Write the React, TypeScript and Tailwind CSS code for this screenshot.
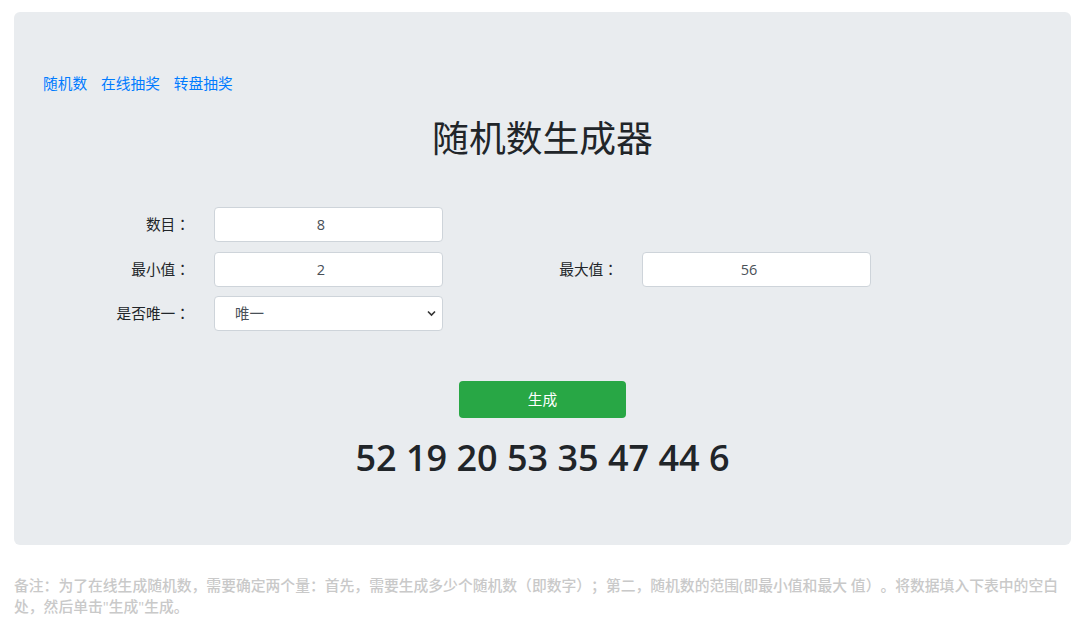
import React from "react";

const cjk = { fontFamily: '"Open Sans", "Noto Sans CJK SC", sans-serif' };
const colon = { fontFamily: '"Noto Sans CJK TC", sans-serif' };

function Label({ text }: { text: string }) {
  return (
    <label className="w-[147px] text-right text-[14.7px] text-[#212529]">
      {text}
      <span style={colon}>：</span>
    </label>
  );
}

function Field({ label, value }: { label: string; value: string }) {
  return (
    <div className="flex items-center w-[428px]">
      <Label text={label} />
      <input
        type="number"
        defaultValue={value}
        className="ml-[24px] w-[229px] h-[35px] bg-white border border-[#ced4da] rounded-[4px] text-center text-[14.5px] text-[#495057] outline-none"
        style={cjk}
      />
    </div>
  );
}

export default function App() {
  return (
    <div className="bg-white min-h-[623px] pl-[14px] pt-[12px]" style={cjk}>
      <div className="w-[1057px] bg-[#e9ecef] rounded-[6px] pt-[61px] pb-[65px] px-[29px]">
        <div className="flex gap-[14px] h-[21px] leading-[21px] text-[14.7px]">
          <a className="text-[#007bff]">随机数</a>
          <a className="text-[#007bff]">在线抽奖</a>
          <a className="text-[#007bff]">转盘抽奖</a>
        </div>
        <h1 className="mt-[22px] text-center text-[36.8px] leading-[44px] text-[#212529] font-normal">随机数生成器</h1>
        <div className="mt-[47px] flex flex-col">
          <div className="flex">
            <Field label="数目" value="8" />
          </div>
          <div className="flex mt-[10px]">
            <Field label="最小值" value="2" />
            <Field label="最大值" value="56" />
          </div>
          <div className="flex mt-[9px]">
            <div className="flex items-center w-[428px]">
              <Label text="是否唯一" />
              <div className="relative ml-[24px] w-[229px] h-[35px]">
                <select
                  className="appearance-none w-full h-full bg-white border border-[#ced4da] rounded-[4px] pl-[20px] text-[14.5px] text-[#495057] outline-none"
                  style={cjk}
                  defaultValue="唯一"
                >
                  <option>唯一</option>
                  <option>不唯一</option>
                </select>
                <svg
                  className="absolute right-[7px] top-[14px] pointer-events-none"
                  width="9"
                  height="7"
                  viewBox="0 0 9 7"
                >
                  <path d="M1 1.5 L4.5 5 L8 1.5" fill="none" stroke="#333" strokeWidth="1.6" />
                </svg>
              </div>
            </div>
          </div>
        </div>
        <div className="mt-[50px] flex justify-center">
          <button className="w-[167px] h-[37px] bg-[#28a745] text-white rounded-[4px] text-[14.7px]" style={cjk}>
            生成
          </button>
        </div>
        <div
          className="mt-[18px] text-center text-[36px] leading-[44px] font-semibold text-[#212529]"
          style={cjk}
        >
          52 19 20 53 35 47 44 6
        </div>
      </div>
      <p className="mt-[30px] w-[1057px] text-[14.8px] leading-[21px] font-medium text-[#c9c9c9] [text-spacing-trim:space-all]">
        备注：为了在线生成随机数，需要确定两个量：首先，需要生成多少个随机数（即数字）；第二，随机数的范围(即最小值和最大 值）。将数据填入下表中的空白处，然后单击"生成"生成。
      </p>
    </div>
  );
}
